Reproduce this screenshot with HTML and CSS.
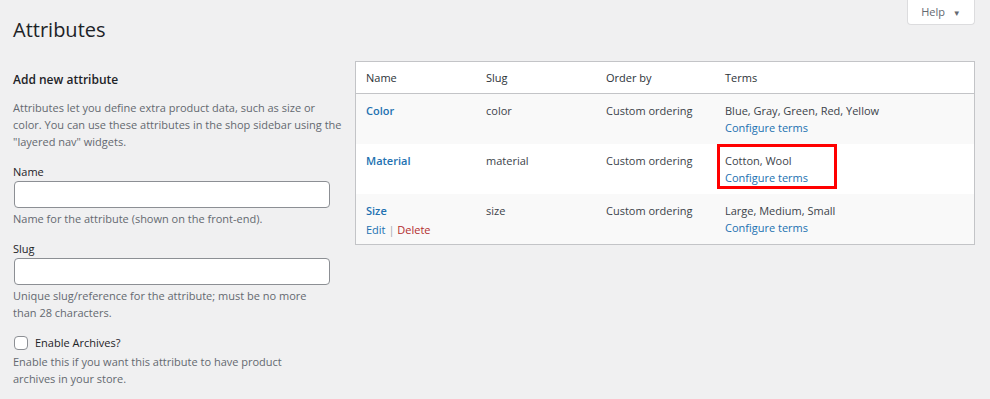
FILE: index.html
```html
<!DOCTYPE html>
<html lang="en">
<head>
    <meta charset="UTF-8">
    <title>Attributes</title>
    <link rel="stylesheet" href="styles.css">
</head>
<body>
    <div class="help-bar">
        <button class="help-tab" type="button">Help <span class="caret">&#9660;</span></button>
    </div>
    <div class="wrap">
        <h1>Attributes</h1>
        <div class="columns">
            <div class="col-left">
                <h2>Add new attribute</h2>
                <p class="intro">Attributes let you define extra product data, such as size or color. You can use these attributes in the shop sidebar using the "layered nav" widgets.</p>
                <div class="field">
                    <label for="attrName">Name</label>
                    <input type="text" id="attrName">
                    <p class="desc">Name for the attribute (shown on the front-end).</p>
                </div>
                <div class="field">
                    <label for="attrSlug">Slug</label>
                    <input type="text" id="attrSlug">
                    <p class="desc">Unique slug/reference for the attribute; must be no more<br>than 28 characters.</p>
                </div>
                <div class="field field-check">
                    <label class="check"><input type="checkbox"> Enable Archives?</label>
                    <p class="desc">Enable this if you want this attribute to have product<br>archives in your store.</p>
                </div>
            </div>
            <div class="col-right">
                <table class="attr-table">
                    <thead>
                        <tr>
                            <th class="c-name">Name</th>
                            <th class="c-slug">Slug</th>
                            <th class="c-order">Order by</th>
                            <th>Terms</th>
                        </tr>
                    </thead>
                    <tbody>
                        <tr class="alt">
                            <td><a class="attr-link" href="#">Color</a></td>
                            <td>color</td>
                            <td>Custom ordering</td>
                            <td><div class="terms">Blue, Gray, Green, Red, Yellow<br><a href="#">Configure terms</a></div></td>
                        </tr>
                        <tr>
                            <td><a class="attr-link" href="#">Material</a></td>
                            <td>material</td>
                            <td>Custom ordering</td>
                            <td><div class="terms highlight">Cotton, Wool<br><a href="#">Configure terms</a></div></td>
                        </tr>
                        <tr class="alt">
                            <td><a class="attr-link" href="#">Size</a>
                                <div class="row-actions"><a href="#">Edit</a> | <a class="delete" href="#">Delete</a></div>
                            </td>
                            <td>size</td>
                            <td>Custom ordering</td>
                            <td><div class="terms">Large, Medium, Small<br><a href="#">Configure terms</a></div></td>
                        </tr>
                    </tbody>
                </table>
            </div>
        </div>
    </div>
</body>
</html>
```

FILE: styles.css
```css
body {
    margin: 0;
    background: #f0f0f1;
    color: #3c434a;
    font-family: "Open Sans", sans-serif;
    font-size: 11px;
    line-height: 17px;
}

a {
    color: #2271b1;
    text-decoration: none;
}

.help-bar {
    display: flex;
    justify-content: flex-end;
    padding-right: 15px;
    height: 0;
}

.help-tab {
    height: 25px;
    width: 68px;
    background: #fff;
    border: 1px solid #dcdcde;
    border-top: none;
    border-radius: 0 0 4px 4px;
    color: #646970;
    font-family: "Open Sans", sans-serif;
    font-size: 11px;
    padding: 0 0 2px 0;
}

.help-tab .caret {
    font-size: 8px;
    margin-left: 5px;
    color: #646970;
}

.wrap {
    padding: 0 15px 0 13px;
}

h1 {
    margin: 0;
    padding: 15px 0 0 0;
    font-size: 20px;
    font-weight: 400;
    line-height: 29px;
    color: #1d2327;
}

.columns {
    display: flex;
    gap: 10px;
    margin-top: 11px;
}

.col-left {
    width: 332px;
    flex: none;
}

.col-right {
    flex: 1;
}

h2 {
    margin: 15px 0 0 0;
    font-size: 12px;
    font-weight: 600;
    line-height: 20px;
    color: #1d2327;
}

.intro {
    margin: 9px 0 0 0;
    color: #646970;
}

.field {
    margin-top: 14px;
}

.field label {
    display: block;
    color: #1d2327;
    line-height: 16px;
}

.field input[type="text"] {
    display: block;
    box-sizing: border-box;
    width: 316px;
    height: 27px;
    margin: 1px 0 0 1px;
    border: 1px solid #8c8f94;
    border-radius: 4px;
    background: #fff;
}

.desc {
    margin: 2px 0 0 0;
    color: #646970;
}

.field + .field {
    margin-top: 14px;
}

.field-check .desc {
    margin-top: 2px;
}

.check {
    display: flex !important;
    align-items: center;
    gap: 7px;
    margin-top: 2px;
}

.check input {
    appearance: none;
    width: 14px;
    height: 14px;
    margin: 0 0 0 1px;
    border: 1px solid #8c8f94;
    border-radius: 4px;
    background: #fff;
}

.attr-table {
    width: 100%;
    border-collapse: collapse;
    background: #fff;
    border: 1px solid #c3c4c7;
    margin-top: 6px;
}

.attr-table th {
    text-align: left;
    font-weight: 400;
    color: #2c3338;
    padding: 7px 10px 7px 10px;
    height: 17px;
    border-bottom: 1px solid #c3c4c7;
}

.attr-table td {
    vertical-align: top;
    padding: 8px 10px 0 10px;
    height: 42px;
}

.attr-table tr.alt td {
    background: #f9f9f9;
}

.c-name { width: 100px; }
.c-slug { width: 100px; }
.c-order { width: 99px; }

.attr-link {
    font-weight: 600;
}

.row-actions {
    margin-top: 2px;
    color: #a7aaad;
}

.row-actions .delete {
    color: #b32d2e;
}

.terms {
    display: inline-block;
}

.terms.highlight {
    outline: 3px solid #ff0000;
    padding: 5px 26px 0 5px;
    margin: -5px 0 0 -5px;
}
```
